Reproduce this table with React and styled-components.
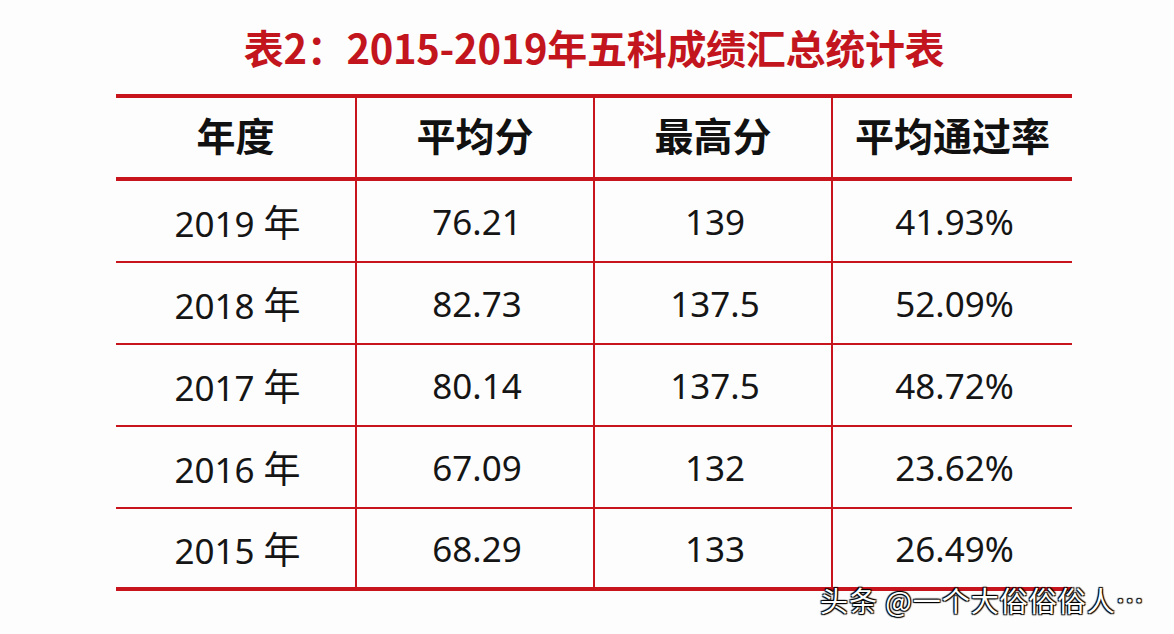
import React from "react";
import styled, { createGlobalStyle } from "styled-components";

const rows = [
  { year: "2019", avg: "76.21", max: "139", rate: "41.93%" },
  { year: "2018", avg: "82.73", max: "137.5", rate: "52.09%" },
  { year: "2017", avg: "80.14", max: "137.5", rate: "48.72%" },
  { year: "2016", avg: "67.09", max: "132", rate: "23.62%" },
  { year: "2015", avg: "68.29", max: "133", rate: "26.49%" },
];

const headers = [
  { label: "年度", width: 241 },
  { label: "平均分", width: 238 },
  { label: "最高分", width: 238 },
  { label: "平均通过率", width: 239 },
];

export default function App() {
  return (
    <Page>
      <GlobalStyle />
      <Sheet>
        <Title>表2：2015-2019年五科成绩汇总统计表</Title>
        <Table>
          <thead>
            <tr>
              {headers.map((h) => (
                <Th key={h.label} $width={h.width}>
                  {h.label}
                </Th>
              ))}
            </tr>
          </thead>
          <tbody>
            {rows.map((r) => (
              <Row key={r.year}>
                <Td>
                  {r.year} <Unit>年</Unit>
                </Td>
                <Td>{r.avg}</Td>
                <Td>{r.max}</Td>
                <Td>{r.rate}</Td>
              </Row>
            ))}
          </tbody>
        </Table>
      </Sheet>
      <Watermark>头条 @一个大俗俗俗人…</Watermark>
    </Page>
  );
}

const GlobalStyle = createGlobalStyle`
  html, body {
    margin: 0;
    padding: 0;
    background: #fdfdfd;
  }
`;

const Page = styled.div`
  position: relative;
  width: 1174px;
  height: 634px;
  overflow: hidden;
  background: #fdfdfd;
  padding-top: 27px;
  box-sizing: border-box;
`;

const Sheet = styled.div`
  width: 956px;
  margin-left: 116px;
  display: flex;
  flex-direction: column;
`;

const Title = styled.h1`
  margin: 0 0 27px;
  height: 40px;
  line-height: 40px;
  text-align: center;
  font-family: "Noto Sans CJK SC", "Noto Sans", sans-serif;
  font-size: 40px;
  font-weight: 700;
  color: #c3151d;
  letter-spacing: -0.3px;
`;

const Table = styled.table`
  width: 956px;
  border-collapse: separate;
  border-spacing: 0;
  table-layout: fixed;
  border-top: 4px solid #c8141c;
`;

const Th = styled.th`
  box-sizing: border-box;
  width: ${(p) => p.$width}px;
  height: 83px;
  padding: 0 0 8px;
  border-bottom: 4px solid #c8141c;
  border-right: 2px solid #c8141c;
  font-family: "Noto Sans CJK SC", sans-serif;
  font-size: 39px;
  font-weight: 700;
  color: #111;
  text-align: center;
  vertical-align: middle;
  &:last-child {
    border-right: none;
  }
`;

const Row = styled.tr`
  &:last-child td {
    height: 78px;
    border-bottom: 4px solid #c8141c;
  }
`;

const Td = styled.td`
  height: 80px;
  padding: 0 0 0 4px;
  border-bottom: 2px solid #c8141c;
  border-right: 2px solid #c8141c;
  font-family: "Noto Sans", "Noto Sans CJK SC", sans-serif;
  font-size: 35px;
  font-weight: 400;
  color: #151515;
  text-align: center;
  vertical-align: middle;
  &:last-child {
    border-right: none;
  }
`;

const Unit = styled.span`
  font-family: "Noto Sans CJK SC", sans-serif;
  font-size: 37px;
`;

const Watermark = styled.div`
  position: absolute;
  left: 820px;
  top: 584px;
  font-family: "Noto Sans CJK SC", sans-serif;
  font-size: 28px;
  line-height: 32px;
  color: #fff;
  white-space: nowrap;
  letter-spacing: 1px;
  text-shadow: 1px 1px 1px #000, -1px -1px 1px #000, 1px -1px 1px #000,
    -1px 1px 1px #000;
`;
